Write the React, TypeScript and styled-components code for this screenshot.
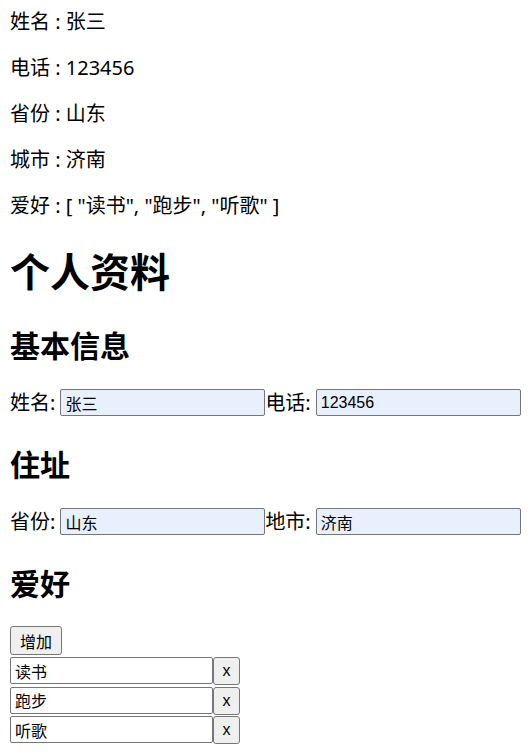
import styled, { createGlobalStyle } from 'styled-components'

const GlobalStyle = createGlobalStyle`
  html, body {
    margin: 0;
    padding: 0;
    background: #ffffff;
  }
  body {
    font-family: 'Noto Sans', 'Noto Sans CJK SC', sans-serif;
    color: #000000;
  }
`

const Page = styled.div`
  padding: 9px 10px 8px;
  font-size: 20px;
  line-height: 26px;
`

const InfoLine = styled.p`
  margin: 20px 0;
  &:first-child {
    margin-top: 0;
  }
`

const Title = styled.h1`
  font-size: 40px;
  line-height: 54px;
  font-weight: 700;
  margin: 26px 0 27px;
`

const SectionTitle = styled.h2`
  font-size: 30px;
  line-height: 40px;
  font-weight: 700;
  margin: 25px 0 22px;
`

const FieldRow = styled.div`
  box-sizing: border-box;
  display: flex;
  align-items: center;
  height: 32px;
  padding-bottom: 3px;
`

const FieldLabel = styled.label`
  margin-right: 5px;
  white-space: nowrap;
`

const TextInput = styled.input<{ $filled?: boolean; $width?: number }>`
  box-sizing: border-box;
  width: ${(p) => p.$width ?? 205}px;
  height: 27px;
  padding: 1px 4px;
  margin: 0;
  border: 1px solid #767676;
  border-radius: 2px;
  background: ${(p) => (p.$filled ? '#e8f0fe' : '#ffffff')};
  font-family: 'Liberation Sans', 'Noto Sans CJK SC', sans-serif;
  font-size: 16px;
  color: #000000;
  outline: none;
`

const PlainButton = styled.button<{ $small?: boolean }>`
  box-sizing: border-box;
  height: ${(p) => (p.$small ? 28 : 29)}px;
  min-width: ${(p) => (p.$small ? 27 : 52)}px;
  padding: 0 ${(p) => (p.$small ? 6 : 9)}px;
  margin: 0;
  border: 1px solid #767676;
  border-radius: 3px;
  background: #efefef;
  font-family: 'Liberation Sans', 'Noto Sans CJK SC', sans-serif;
  font-size: 16px;
  color: #000000;
`

const HobbyList = styled.div`
  display: flex;
  flex-direction: column;
  margin-top: 2px;
`

const HobbyRow = styled.div`
  display: flex;
  align-items: flex-start;
  height: 29.5px;
`

const person = {
  name: '张三',
  phone: '123456',
  province: '山东',
  city: '济南',
  hobbies: ['读书', '跑步', '听歌']
}

const App = () => {
  return (
    <>
      <GlobalStyle />
      <Page>
        <InfoLine>姓名 : {person.name}</InfoLine>
        <InfoLine>电话 : {person.phone}</InfoLine>
        <InfoLine>省份 : {person.province}</InfoLine>
        <InfoLine>城市 : {person.city}</InfoLine>
        <InfoLine>
          爱好 : [ {person.hobbies.map((h) => `"${h}"`).join(', ')} ]
        </InfoLine>

        <Title>个人资料</Title>

        <SectionTitle>基本信息</SectionTitle>
        <FieldRow>
          <FieldLabel>姓名:</FieldLabel>
          <TextInput $filled defaultValue={person.name} />
          <FieldLabel>电话:</FieldLabel>
          <TextInput $filled defaultValue={person.phone} />
        </FieldRow>

        <SectionTitle>住址</SectionTitle>
        <FieldRow>
          <FieldLabel>省份:</FieldLabel>
          <TextInput $filled defaultValue={person.province} />
          <FieldLabel>地市:</FieldLabel>
          <TextInput $filled defaultValue={person.city} />
        </FieldRow>

        <SectionTitle>爱好</SectionTitle>
        <PlainButton>增加</PlainButton>
        <HobbyList>
          {person.hobbies.map((h) => (
            <HobbyRow key={h}>
              <TextInput $width={203} defaultValue={h} />
              <PlainButton $small>x</PlainButton>
            </HobbyRow>
          ))}
        </HobbyList>
      </Page>
    </>
  )
}

export default App
